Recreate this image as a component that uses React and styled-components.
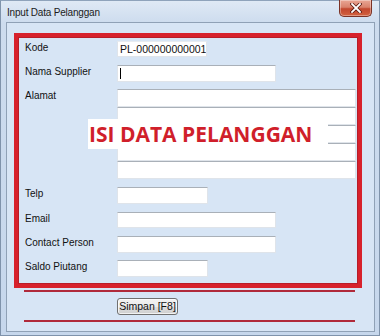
import React from "react";
import styled, { createGlobalStyle } from "styled-components";

const Global = createGlobalStyle`
  html, body { margin: 0; padding: 0; background: #c6d7ec; }
  body { font-family: "Liberation Sans", Arial, sans-serif; }
  * { box-sizing: border-box; }
`;

const Window = styled.div`
  width: 380px;
  height: 336px;
  display: flex;
  flex-direction: column;
  background: linear-gradient(to bottom, #dfe9f5 0px, #cddcee 22px, #c6d7ec 100%);
  border: 1px solid #7f93ab;
  border-top-color: #8fa3bb;
`;

const TitleBar = styled.div`
  height: 21px;
  display: flex;
  align-items: flex-start;
  padding-left: 6px;
  padding-right: 7px;
`;

const Title = styled.div`
  font-family: "Liberation Sans", Arial, sans-serif;
  font-size: 10px;
  letter-spacing: -0.2px;
  color: #1b1b1b;
  margin-top: 6px;
`;

const CloseBtn = styled.div`
  margin-left: auto;
  width: 33px;
  height: 17px;
  margin-top: -1px;
  border: 1px solid #7b3226;
  border-top: none;
  border-radius: 0 0 5px 5px;
  background: linear-gradient(to bottom, #e9a695 0%, #d9826d 45%, #c2472f 55%, #d3623f 100%);
  display: flex;
  align-items: center;
  justify-content: center;
  box-shadow: inset 0 0 0 1px rgba(255, 255, 255, 0.35);
`;

const Client = styled.div`
  flex: 1;
  margin: 0 4px 3px 5px;
  background: #d7e5f5;
  border: 1px solid #8fa1b6;
  display: flex;
  flex-direction: column;
`;

const RedBox = styled.div`
  margin: 10px 0 0 7px;
  width: 348px;
  height: 255px;
  border: 4px solid #d7212c;
  box-shadow: inset 0 0 0 1px #b81c28;
  padding: 4px 0 0 7px;
  display: flex;
  flex-direction: column;
`;

const Row = styled.div`
  display: grid;
  grid-template-columns: 92px 1fr;
  margin-top: ${(p) => p.$mt || 0}px;
`;

const Label = styled.div`
  font-size: 10px;
  color: #111;
  line-height: 17px;
  height: 17px;
  margin-top: -2px;
`;

const Field = styled.div`
  width: ${(p) => p.$w}px;
  height: ${(p) => p.$h || 17}px;
  background: #fff;
  border: 1px solid #dfe4ea;
  border-top: 1px solid ${(p) => (p.$plain ? "#e8ecf0" : "#a9b0b8")};
  font-size: 10.5px;
  line-height: 15px;
  padding-left: 2px;
  color: #111;
  display: flex;
  align-items: center;
  white-space: nowrap;
  overflow: hidden;
`;

const Caret = styled.span`
  display: inline-block;
  width: 1px;
  height: 11px;
  background: #000;
`;

const Stack = styled.div`
  position: relative;
  display: flex;
  flex-direction: column;
`;

const Overlay = styled.div`
  position: absolute;
  left: -29px;
  top: 30px;
  width: 240px;
  height: 30px;
  background: #fff;
  color: #d01f2b;
  font-family: "Open Sans", "Liberation Sans", sans-serif;
  font-weight: 700;
  font-size: 21px;
  line-height: 30px;
  padding-left: 1px;
  white-space: nowrap;
`;

const Divider = styled.div`
  margin: ${(p) => p.$mt}px 0 0 17px;
  width: 331px;
  height: 2px;
  background: #b02a3a;
`;

const ButtonRow = styled.div`
  padding-left: 110px;
  margin-top: 4px;
`;

const Button = styled.button`
  width: 61px;
  height: 17px;
  padding: 0;
  font-family: "Liberation Sans", Arial, sans-serif;
  font-size: 10.5px;
  color: #111;
  border: 1px solid #707070;
  border-radius: 3px;
  background: linear-gradient(to bottom, #f2f2f2 0%, #ebebeb 50%, #dddddd 51%, #cfcfcf 100%);
  box-shadow: inset 0 0 0 1px rgba(255, 255, 255, 0.7);
`;

const alamatRows = [0, 1, 2, 3, 4];

export default function App() {
  return (
    <>
      <Global />
      <Window>
        <TitleBar>
          <Title>Input Data Pelanggan</Title>
          <CloseBtn>
            <svg width="12" height="10" viewBox="0 0 12 10">
              <path d="M2 1 L10 9 M10 1 L2 9" stroke="#5a1a12" strokeWidth="3.4" strokeLinecap="square" />
              <path d="M2 1 L10 9 M10 1 L2 9" stroke="#ffffff" strokeWidth="1.8" strokeLinecap="square" />
            </svg>
          </CloseBtn>
        </TitleBar>
        <Client>
          <RedBox>
            <Row>
              <Label>Kode</Label>
              <Field $w={90} $h={16} $plain>PL-000000000001</Field>
            </Row>
            <Row $mt={8}>
              <Label>Nama Supplier</Label>
              <Field $w={159}>
                <Caret />
              </Field>
            </Row>
            <Row $mt={7}>
              <Label>Alamat</Label>
              <Stack>
                {alamatRows.map((i) => (
                  <Field key={i} $w={239} $h={18} />
                ))}
                <Overlay>ISI DATA PELANGGAN</Overlay>
              </Stack>
            </Row>
            <Row $mt={8}>
              <Label>Telp</Label>
              <Field $w={91} />
            </Row>
            <Row $mt={8}>
              <Label>Email</Label>
              <Field $w={159} $h={16} />
            </Row>
            <Row $mt={8}>
              <Label>Contact Person</Label>
              <Field $w={159} />
            </Row>
            <Row $mt={7}>
              <Label>Saldo Piutang</Label>
              <Field $w={91} />
            </Row>
          </RedBox>
          <Divider $mt={2} />
          <ButtonRow>
            <Button>Simpan [F8]</Button>
          </ButtonRow>
          <Divider $mt={5} />
        </Client>
      </Window>
    </>
  );
}
